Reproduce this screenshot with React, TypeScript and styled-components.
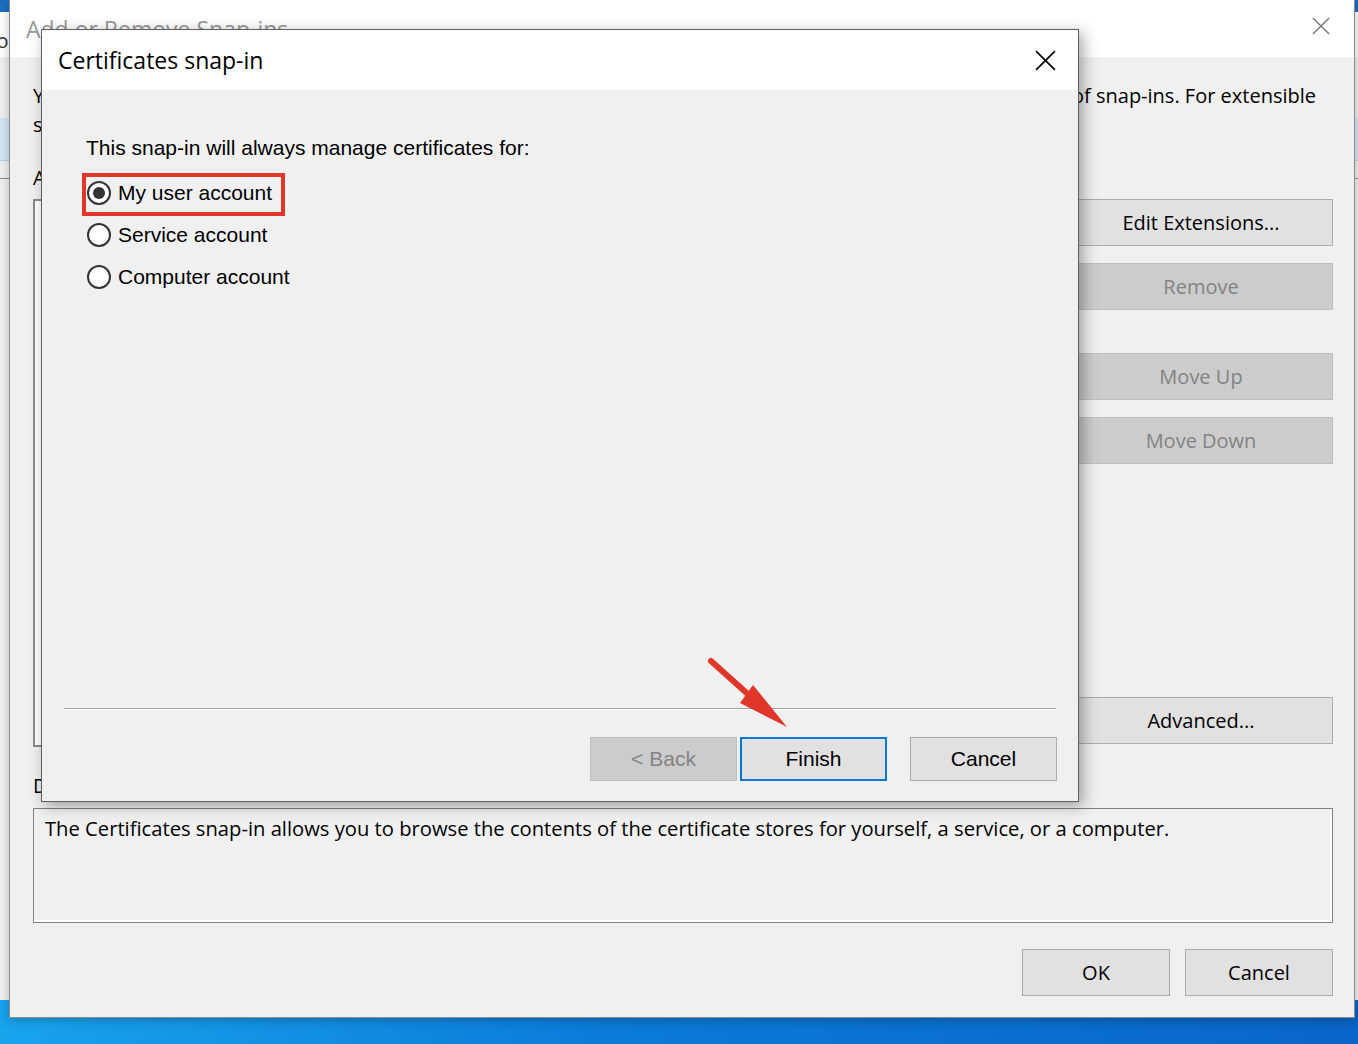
import styled, { createGlobalStyle } from 'styled-components';

const GlobalStyle = createGlobalStyle`
  html, body {
    margin: 0;
    padding: 0;
  }
  body {
    width: 1358px;
    height: 1044px;
    overflow: hidden;
    font-family: 'Open Sans', 'Noto Sans', sans-serif;
    color: #000;
  }
`;

const Desktop = styled.div`
  position: relative;
  width: 1358px;
  height: 1044px;
  overflow: hidden;
  background: linear-gradient(90deg, #19a3ed 0%, #0b7ad8 45%, #0a64c9 100%);
`;

// windows lying behind the snap-in window
const BackWindow = styled.div<{ $side: 'left' | 'right' }>`
  position: absolute;
  top: 0;
  ${({ $side }) => ($side === 'left' ? 'left: -200px;' : 'left: 1350px;')}
  width: 210px;
  height: 1000px;
  background: #f0f0f0;
  display: flex;
  flex-direction: column;
  border-top: 12px solid #1b6fc2;
  box-sizing: border-box;
`;

const BackTitle = styled.div`
  height: 45px;
  background: #fff;
  font-size: 20px;
  line-height: 58px;
  padding-left: 150px;
  white-space: nowrap;
  color: #333;
  overflow: hidden;
`;

const BackMenu = styled.div`
  display: flex;
  padding: 0 4px 4px;
  height: 61px;
  box-sizing: border-box;
  align-items: flex-end;
  font-size: 20px;
  white-space: nowrap;
`;

const BackMenuItem = styled.span`
  padding: 0 10px;
`;

const BackToolbar = styled.div`
  height: 42px;
  background: #d5e6f5;
  border-bottom: 1px solid #b9cfe4;
`;

const BackDivider = styled.div`
  margin-top: 17px;
  height: 1px;
  background: #8a8a8a;
`;

const OuterWindow = styled.div`
  position: absolute;
  left: 9px;
  top: 0;
  width: 1346px;
  height: 1018px;
  box-sizing: border-box;
  background: #f0f0f0;
  border: 1px solid #8c8c8c;
  border-top: none;
  display: flex;
  flex-direction: column;
  box-shadow: 0 2px 10px rgba(0, 0, 0, 0.25);
`;

const OuterTitleBar = styled.div`
  height: 57px;
  flex-shrink: 0;
  background: #fff;
  display: flex;
  align-items: center;
  justify-content: space-between;
  padding: 0 24px 6px 16px;
  box-sizing: border-box;
`;

const OuterTitle = styled.span`
  font-size: 23px;
  color: #999;
  margin-top: 6px;
`;

const OuterBody = styled.div`
  flex: 1;
  display: flex;
  flex-direction: column;
  padding: 24px 21px 21px 23px;
  font-size: 20px;
`;

const Intro = styled.div`
  line-height: 29px;
  margin-right: 17px;
`;

const IntroLine = styled.div`
  display: flex;
  justify-content: space-between;
  white-space: nowrap;
`;

const IntroStart = styled.span`
  min-width: 0;
  overflow: hidden;
  flex-shrink: 1;
`;

const SnapInGrid = styled.div`
  margin-top: 25px;
  display: grid;
  grid-template-columns: 440px 150px 1fr 264px;
  grid-template-rows: 28px 548px;
  column-gap: 20px;
  row-gap: 7px;
`;

const FieldLabel = styled.div`
  line-height: 28px;
`;

const ListBox = styled.div`
  background: #fff;
  border: 2px solid #8a8a8a;
  box-sizing: border-box;
`;

const AddColumn = styled.div`
  display: flex;
  align-items: center;
`;

const ButtonColumn = styled.div`
  display: flex;
  flex-direction: column;
`;

const WinButton = styled.button<{ $disabled?: boolean; $gap?: number }>`
  height: 47px;
  box-sizing: border-box;
  font-family: 'Open Sans', 'Noto Sans', sans-serif;
  font-size: 20px;
  background: ${({ $disabled }) => ($disabled ? '#cccccc' : '#e1e1e1')};
  border: 1px solid ${({ $disabled }) => ($disabled ? '#bfbfbf' : '#adadad')};
  color: ${({ $disabled }) => ($disabled ? '#838383' : '#000')};
  margin-top: ${({ $gap }) => $gap ?? 0}px;
  padding: 0;
  cursor: default;
`;

const AdvancedButton = styled(WinButton)`
  margin-bottom: 3px;
`;

const FooterButton = styled(WinButton)`
  width: 148px;
`;

const DescriptionLabel = styled.div`
  margin-top: 25px;
  line-height: 28px;
`;

const DescriptionBox = styled.div`
  margin-top: 8px;
  height: 115px;
  box-sizing: border-box;
  border: 1px solid #828282;
  box-shadow: inset -2px -2px 0 #fff;
  padding: 5px 11px;
  line-height: 29px;
  font-size: 20.2px;
`;

const Footer = styled.div`
  margin-top: 26px;
  display: flex;
  justify-content: flex-end;
  gap: 15px;
`;

const Dialog = styled.div`
  position: absolute;
  left: 41px;
  top: 29px;
  width: 1038px;
  height: 773px;
  box-sizing: border-box;
  border: 1px solid #5f5f5f;
  background: #f0f0f0;
  display: flex;
  flex-direction: column;
  box-shadow: 4px 4px 14px rgba(0, 0, 0, 0.35);
`;

const DialogTitleBar = styled.div`
  height: 60px;
  flex-shrink: 0;
  background: #fff;
  display: flex;
  align-items: center;
  justify-content: space-between;
  padding: 0 22px 0 16px;
`;

const DialogTitle = styled.span`
  font-family: 'Open Sans', 'Noto Sans', sans-serif;
  font-size: 23px;
  color: #000;
`;

const DialogBody = styled.div`
  flex: 1;
  display: flex;
  flex-direction: column;
  padding: 46px 21px 20px 21px;
  font-family: 'Liberation Sans', Arial, sans-serif;
  font-size: 21px;
`;

const Prompt = styled.div`
  line-height: 24px;
  padding-left: 23px;
`;

const RadioList = styled.div`
  margin-top: 21px;
  padding-left: 24px;
  display: flex;
  flex-direction: column;
  align-items: flex-start;
  gap: 18px;
`;

const RadioRow = styled.label`
  position: relative;
  display: inline-flex;
  align-items: center;
  gap: 7px;
  height: 24px;
  line-height: 24px;
`;

const RadioCircle = styled.span<{ $checked?: boolean }>`
  width: 24px;
  height: 24px;
  box-sizing: border-box;
  border-radius: 50%;
  border: 2px solid #333;
  background: #fff;
  display: flex;
  align-items: center;
  justify-content: center;

  &::after {
    content: '';
    width: 12px;
    height: 12px;
    border-radius: 50%;
    background: ${({ $checked }) => ($checked ? '#333' : 'transparent')};
  }
`;

// red annotation box drawn over the first option
const Highlight = styled.span`
  position: absolute;
  left: -5px;
  right: -13px;
  top: -8px;
  bottom: -11px;
  border: 4px solid #e1372b;
  pointer-events: none;
`;

const Spacer = styled.div`
  flex: 1;
`;

const Separator = styled.div`
  height: 1px;
  background: #a0a0a0;
  border-bottom: 1px solid #fff;
  margin: 0 1px;
`;

const WizardButtons = styled.div`
  margin-top: 27px;
  display: flex;
  justify-content: flex-end;
`;

const WizardButton = styled.button<{ $disabled?: boolean; $primary?: boolean; $gap?: number }>`
  width: 147px;
  height: 44px;
  box-sizing: border-box;
  margin-left: ${({ $gap }) => $gap ?? 0}px;
  font-family: 'Liberation Sans', Arial, sans-serif;
  font-size: 21px;
  padding: 0;
  background: ${({ $disabled }) => ($disabled ? '#cccccc' : '#e1e1e1')};
  border: ${({ $primary, $disabled }) =>
    $primary ? '2px solid #0078d7' : `1px solid ${$disabled ? '#bfbfbf' : '#adadad'}`};
  color: ${({ $disabled }) => ($disabled ? '#838383' : '#000')};
  cursor: default;
`;

const ArrowMark = styled.svg`
  position: absolute;
  left: 700px;
  top: 650px;
  width: 100px;
  height: 90px;
  pointer-events: none;
`;

const CloseIcon = ({ size, color }: { size: number; color: string }) => (
  <svg width={size} height={size} viewBox="0 0 20 20">
    <path d="M1 1 L19 19 M19 1 L1 19" stroke={color} strokeWidth="1.6" fill="none" />
  </svg>
);

const options = [
  { label: 'My user account', checked: true },
  { label: 'Service account', checked: false },
  { label: 'Computer account', checked: false },
];

const App: React.FC = () => {
  return (
    <>
      <GlobalStyle />
      <Desktop>
        <BackWindow $side="left">
          <BackTitle>Console1 - [Console Root]</BackTitle>
          <BackMenu>
            <BackMenuItem>File</BackMenuItem>
            <BackMenuItem>Action</BackMenuItem>
            <BackMenuItem>View</BackMenuItem>
            <BackMenuItem>Favorites</BackMenuItem>
          </BackMenu>
          <BackToolbar />
          <BackDivider />
        </BackWindow>
        <BackWindow $side="right">
          <BackTitle />
          <BackMenu />
          <BackToolbar />
          <BackDivider />
        </BackWindow>

        <OuterWindow>
          <OuterTitleBar>
            <OuterTitle>Add or Remove Snap-ins</OuterTitle>
            <CloseIcon size={18} color="#7a7a7a" />
          </OuterTitleBar>
          <OuterBody>
            <Intro>
              <IntroLine>
                <IntroStart>
                  You can select snap-ins for this console from those available on your computer and configure the selected set
                </IntroStart>
                <span>of snap-ins. For extensible</span>
              </IntroLine>
              <IntroLine>snap-ins, you can configure which extensions are enabled.</IntroLine>
            </Intro>

            <SnapInGrid>
              <FieldLabel>Available snap-ins:</FieldLabel>
              <div />
              <FieldLabel>Selected snap-ins:</FieldLabel>
              <div />
              <ListBox />
              <AddColumn>
                <FooterButton>Add &gt;</FooterButton>
              </AddColumn>
              <ListBox />
              <ButtonColumn>
                <WinButton>Edit Extensions...</WinButton>
                <WinButton $disabled $gap={17}>Remove</WinButton>
                <WinButton $disabled $gap={43}>Move Up</WinButton>
                <WinButton $disabled $gap={17}>Move Down</WinButton>
                <Spacer />
                <AdvancedButton>Advanced...</AdvancedButton>
              </ButtonColumn>
            </SnapInGrid>

            <DescriptionLabel>Description:</DescriptionLabel>
            <DescriptionBox>
              The Certificates snap-in allows you to browse the contents of the certificate stores for yourself, a service, or a computer.
            </DescriptionBox>

            <Footer>
              <FooterButton>OK</FooterButton>
              <FooterButton>Cancel</FooterButton>
            </Footer>
          </OuterBody>
        </OuterWindow>

        <Dialog>
          <DialogTitleBar>
            <DialogTitle>Certificates snap-in</DialogTitle>
            <CloseIcon size={21} color="#000" />
          </DialogTitleBar>
          <DialogBody>
            <Prompt>This snap-in will always manage certificates for:</Prompt>
            <RadioList>
              {options.map((o) => (
                <RadioRow key={o.label}>
                  <RadioCircle $checked={o.checked} />
                  {o.label}
                  {o.checked && <Highlight />}
                </RadioRow>
              ))}
            </RadioList>
            <Spacer />
            <Separator />
            <WizardButtons>
              <WizardButton $disabled>&lt; Back</WizardButton>
              <WizardButton $primary $gap={3}>Finish</WizardButton>
              <WizardButton $gap={23}>Cancel</WizardButton>
            </WizardButtons>
          </DialogBody>
        </Dialog>

        <ArrowMark viewBox="0 0 100 90">
          <line x1="11" y1="11" x2="50" y2="46" stroke="#e1372b" strokeWidth="6" strokeLinecap="round" />
          <polygon points="87,77 40,53 53,35" fill="#e1372b" />
        </ArrowMark>
      </Desktop>
    </>
  );
};

export default App;
